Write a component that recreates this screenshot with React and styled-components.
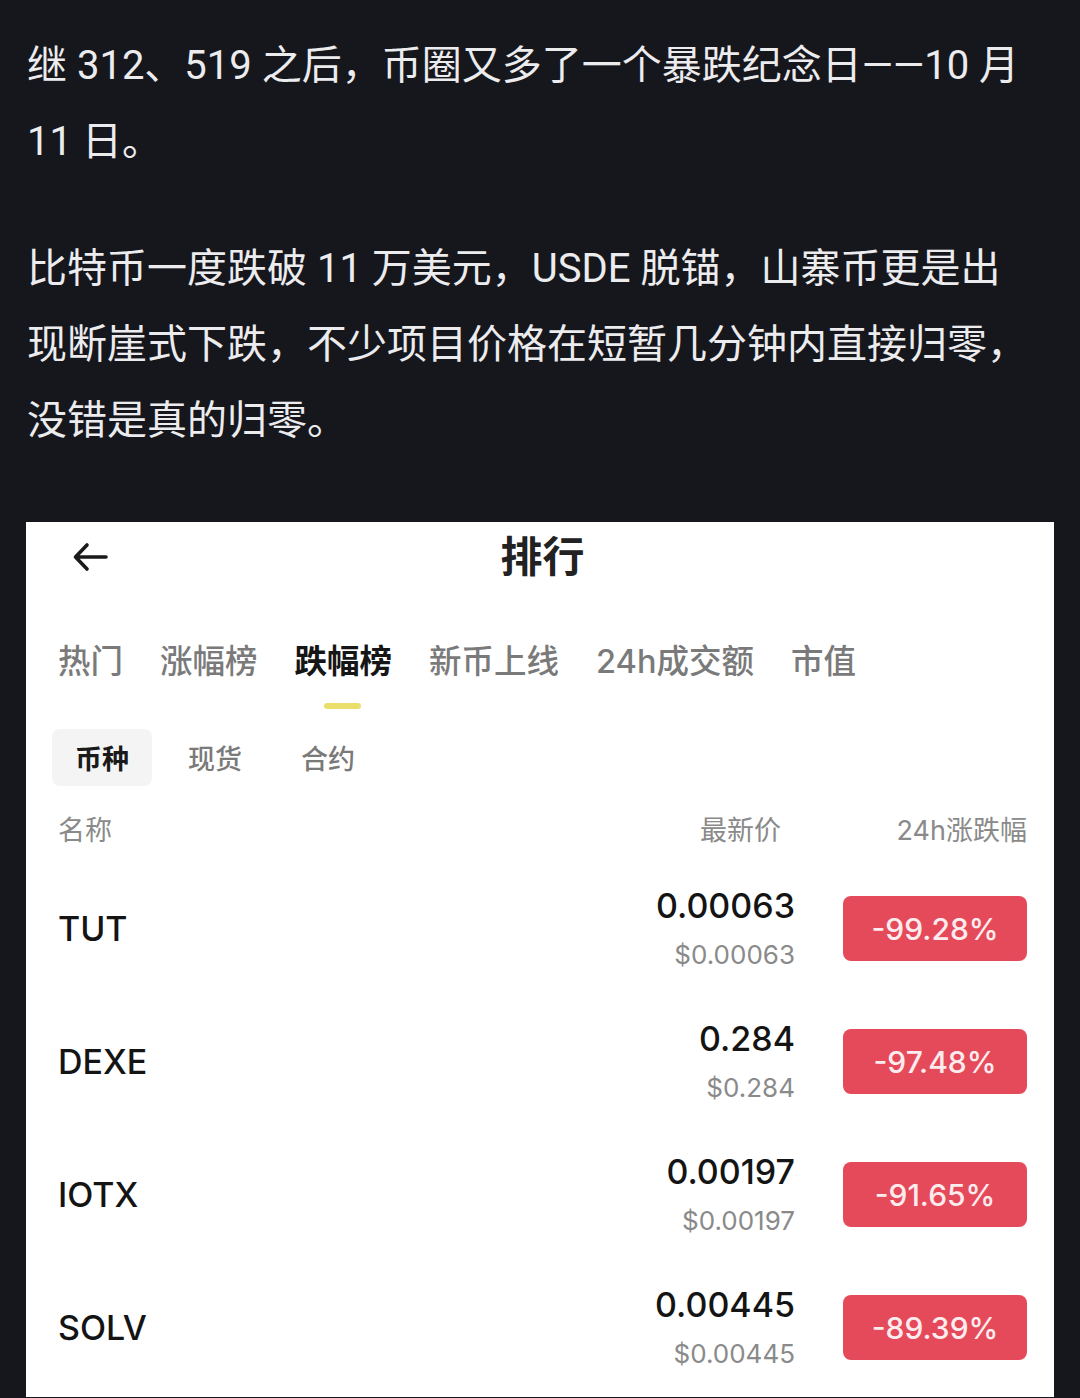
import React from 'react';
import styled, { createGlobalStyle } from 'styled-components';

const GlobalStyle = createGlobalStyle`
  html, body {
    margin: 0;
    padding: 0;
    background-color: #16171d;
  }
  * {
    box-sizing: border-box;
  }
`;

const coins = [
  { name: 'TUT', price: '0.00063', usd: '$0.00063', change: '-99.28%' },
  { name: 'DEXE', price: '0.284', usd: '$0.284', change: '-97.48%' },
  { name: 'IOTX', price: '0.00197', usd: '$0.00197', change: '-91.65%' },
  { name: 'SOLV', price: '0.00445', usd: '$0.00445', change: '-89.39%' },
];

const tabs = ['热门', '涨幅榜', '跌幅榜', '新币上线', '24h成交额', '市值'];
const subTabs = ['币种', '现货', '合约'];

const App = () => {
  return (
    <Page>
      <GlobalStyle />
      <Article>
        <Paragraph>继 312、519 之后，币圈又多了一个暴跌纪念日——10 月 11 日。</Paragraph>
        <Paragraph>
          比特币一度跌破 11 万美元，USDE 脱锚，山寨币更是出现断崖式下跌，不少项目价格在短暂几分钟内直接归零，没错是真的归零。
        </Paragraph>
      </Article>

      <Card>
        <Header>
          <BackButton>
            <svg width="40" height="40" viewBox="0 0 40 40" fill="none">
              <path
                d="M35 20H5M16 8L4.5 20L16 32"
                stroke="#1a1a1a"
                strokeWidth="3.6"
                strokeLinecap="round"
                strokeLinejoin="round"
              />
            </svg>
          </BackButton>
          <Title>排行</Title>
        </Header>

        <Tabs>
          {tabs.map((t) => (
            <Tab key={t} $active={t === '跌幅榜'}>
              {t}
              {t === '跌幅榜' && <Underline />}
            </Tab>
          ))}
        </Tabs>

        <SubTabs>
          {subTabs.map((t) => (
            <SubTab key={t} $active={t === '币种'}>{t}</SubTab>
          ))}
        </SubTabs>

        <ColumnHeader>
          <HeadCell>名称</HeadCell>
          <HeadCell $right $pad>最新价</HeadCell>
          <HeadCell $right>24h涨跌幅</HeadCell>
        </ColumnHeader>

        <RowList>
          {coins.map((c) => (
            <Row key={c.name}>
              <CoinName>{c.name}</CoinName>
              <PriceBox>
                <Price>{c.price}</Price>
                <UsdPrice>{c.usd}</UsdPrice>
              </PriceBox>
              <ChangeBadge>{c.change}</ChangeBadge>
            </Row>
          ))}
        </RowList>
      </Card>
    </Page>
  );
};

export default App;

const Page = styled.div`
  height: 1398px;
  background-color: #16171d;
  overflow: hidden;
`;

const Article = styled.div`
  padding: 28px 45px 0 27px;
`;

const Paragraph = styled.p`
  margin: 0 0 51px;
  font-family: Roboto, 'Noto Sans CJK SC', sans-serif;
  font-size: 40px;
  line-height: 76px;
  color: #ececee;

  &:last-child {
    margin-bottom: 63px;
  }
`;

const Card = styled.div`
  margin: 0 26px;
  background-color: #ffffff;
  padding: 0 27px 3px 32px;
  font-family: Inter, 'Noto Sans CJK SC', sans-serif;
`;

const Header = styled.div`
  position: relative;
  height: 70px;
  display: flex;
  align-items: center;
  justify-content: center;
`;

const BackButton = styled.div`
  position: absolute;
  left: 13px;
  top: 15px;
  display: flex;
`;

const Title = styled.h1`
  margin: 0;
  font-size: 42px;
  font-weight: 700;
  color: #222;
  line-height: 70px;
`;

const Tabs = styled.div`
  display: flex;
  gap: 37px;
  margin-top: 50px;
`;

const Tab = styled.div`
  position: relative;
  font-size: 32.5px;
  line-height: 40px;
  font-weight: ${(p) => (p.$active ? 700 : 500)};
  color: ${(p) => (p.$active ? '#161616' : '#7a7a7a')};
`;

const Underline = styled.span`
  position: absolute;
  left: 50%;
  top: 61px;
  width: 37px;
  height: 6px;
  margin-left: -19px;
  border-radius: 3px;
  background-color: #ebdf6c;
`;

const SubTabs = styled.div`
  display: flex;
  gap: 13px;
  margin: 47px 0 0 -6px;
`;

const SubTab = styled.div`
  height: 57px;
  padding: 0 23px;
  display: flex;
  align-items: center;
  border-radius: 8px;
  font-size: 27px;
  font-weight: ${(p) => (p.$active ? 700 : 500)};
  color: ${(p) => (p.$active ? '#1a1a1a' : '#7a7a7a')};
  background-color: ${(p) => (p.$active ? '#f4f4f4' : 'transparent')};
`;

const ColumnHeader = styled.div`
  display: grid;
  grid-template-columns: 1fr auto 184px;
  column-gap: 48px;
  align-items: center;
  height: 40px;
  margin-top: 22px;
`;

const HeadCell = styled.div`
  font-size: 27px;
  color: #8a8a8a;
  text-align: ${(p) => (p.$right ? 'right' : 'left')};
  padding-right: ${(p) => (p.$pad ? '14px' : '0')};
`;

const RowList = styled.div`
  margin-top: 14px;
`;

const Row = styled.div`
  display: grid;
  grid-template-columns: 1fr auto 184px;
  column-gap: 48px;
  align-items: center;
  height: 133px;
`;

const CoinName = styled.div`
  font-size: 34px;
  font-weight: 500;
  color: #141414;
  line-height: 40px;
`;

const PriceBox = styled.div`
  display: flex;
  flex-direction: column;
  align-items: flex-end;
  gap: 9px;
`;

const Price = styled.div`
  font-size: 34px;
  font-weight: 500;
  line-height: 44px;
  color: #141414;
`;

const UsdPrice = styled.div`
  font-size: 26px;
  line-height: 36px;
  color: #8a8a8a;
`;

const ChangeBadge = styled.div`
  height: 65px;
  border-radius: 8px;
  background-color: #e54a5b;
  color: #fdecee;
  font-size: 30px;
  font-weight: 500;
  display: flex;
  align-items: center;
  justify-content: center;
`;
